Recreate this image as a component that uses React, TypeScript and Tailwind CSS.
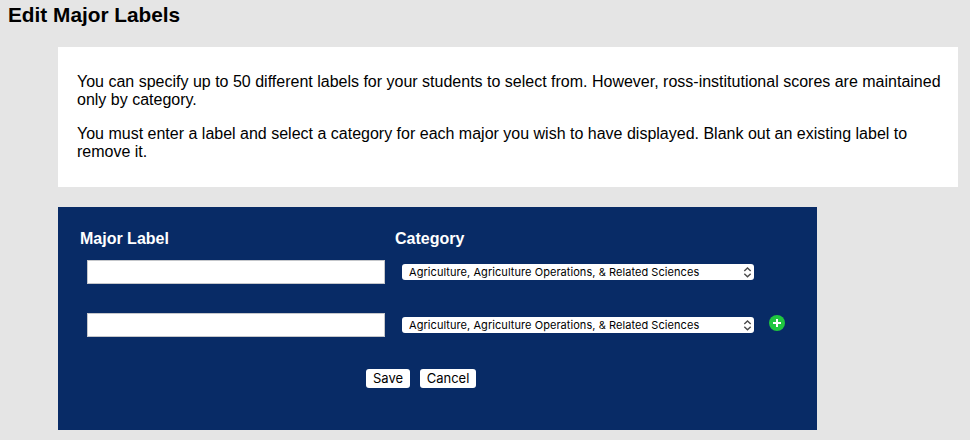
import React, { useState } from 'react';

const CATEGORIES = [
  'Agriculture, Agriculture Operations, & Related Sciences',
];

interface MajorRowProps {
  label: string;
  onChange: (value: string) => void;
  onAdd?: () => void;
}

const SelectArrows: React.FC = () => (
  <svg
    className="pointer-events-none absolute top-[3px] right-[2px] w-[9px] h-[11px]"
    viewBox="0 0 9 11"
    fill="none"
    stroke="#4a4a4a"
    strokeWidth="1.4"
  >
    <path d="M1.3 4 L4.5 1 L7.7 4" />
    <path d="M1.3 6.8 L4.5 9.8 L7.7 6.8" />
  </svg>
);

const AddIcon: React.FC = () => (
  <svg className="block w-4 h-4" viewBox="0 0 16 16">
    <circle cx="8" cy="8" r="8" fill="#20c63f" />
    <path d="M8 4v8M4 8h8" stroke="#fff" strokeWidth="2" />
  </svg>
);

const MajorRow: React.FC<MajorRowProps> = ({ label, onChange, onAdd }) => (
  <div className="flex h-6 items-center">
    <input
      type="text"
      aria-label="Major Label"
      value={label}
      onChange={(e) => onChange(e.target.value)}
      className="ml-[7px] w-[298px] h-6 px-1 bg-white border border-[#c5c7cb] text-black text-sm"
    />
    <div className="relative ml-[17px] w-[352px] h-4">
      <select
        aria-label="Category"
        className="block w-full h-4 appearance-none rounded-[3px] bg-white pl-[7px] pr-5 font-['Inter',sans-serif] text-[11px] leading-4 tracking-[0.06px] text-black"
      >
        {CATEGORIES.map((category) => (
          <option key={category}>{category}</option>
        ))}
      </select>
      <SelectArrows />
    </div>
    {onAdd && (
      <button aria-label="Add major" onClick={onAdd} className="ml-[15px] mb-1">
        <AddIcon />
      </button>
    )}
  </div>
);

export default function App() {
  const [labels, setLabels] = useState(['', '']);

  const updateLabel = (index: number, value: string) => {
    setLabels(labels.map((label, i) => (i === index ? value : label)));
  };

  return (
    <div className="h-[440px] overflow-hidden bg-[#e5e5e5] font-['Liberation_Sans',sans-serif] text-base text-black">
      <h1 className="h-[47px] pl-2 pt-[3px] text-[20.8px] leading-6 font-bold">Edit Major Labels</h1>

      {/* Instructions */}
      <div className="ml-[58px] w-[900px] h-[140px] bg-white pl-[19px] pr-3 pt-[26px] leading-[18px]">
        <p>
          You can specify up to 50 different labels for your students to select from. However, ross-institutional scores are maintained only by category.
        </p>
        <p className="mt-4">
          You must enter a label and select a category for each major you wish to have displayed. Blank out an existing label to remove it.
        </p>
      </div>

      {/* Majors form */}
      <div className="ml-[58px] mt-5 w-[759px] h-[223px] bg-[#082b66] pl-[22px] pt-[23px]">
        <div className="flex h-[30px] leading-[18px] font-bold text-white">
          <div className="w-[315px]">Major Label</div>
          <div>Category</div>
        </div>
        <div className="flex flex-col gap-[29px]">
          {labels.map((label, i) => (
            <MajorRow
              key={i}
              label={label}
              onChange={(value) => updateLabel(i, value)}
              onAdd={i === labels.length - 1 ? () => setLabels([...labels, '']) : undefined}
            />
          ))}
        </div>
        <div className="mt-8 ml-[286px] flex gap-2.5 font-['Inter',sans-serif] text-[13px] leading-[19px]">
          <button className="w-11 h-[19px] rounded-[3px] bg-white">Save</button>
          <button className="w-14 h-[19px] rounded-[3px] bg-white">Cancel</button>
        </div>
      </div>
    </div>
  );
}
